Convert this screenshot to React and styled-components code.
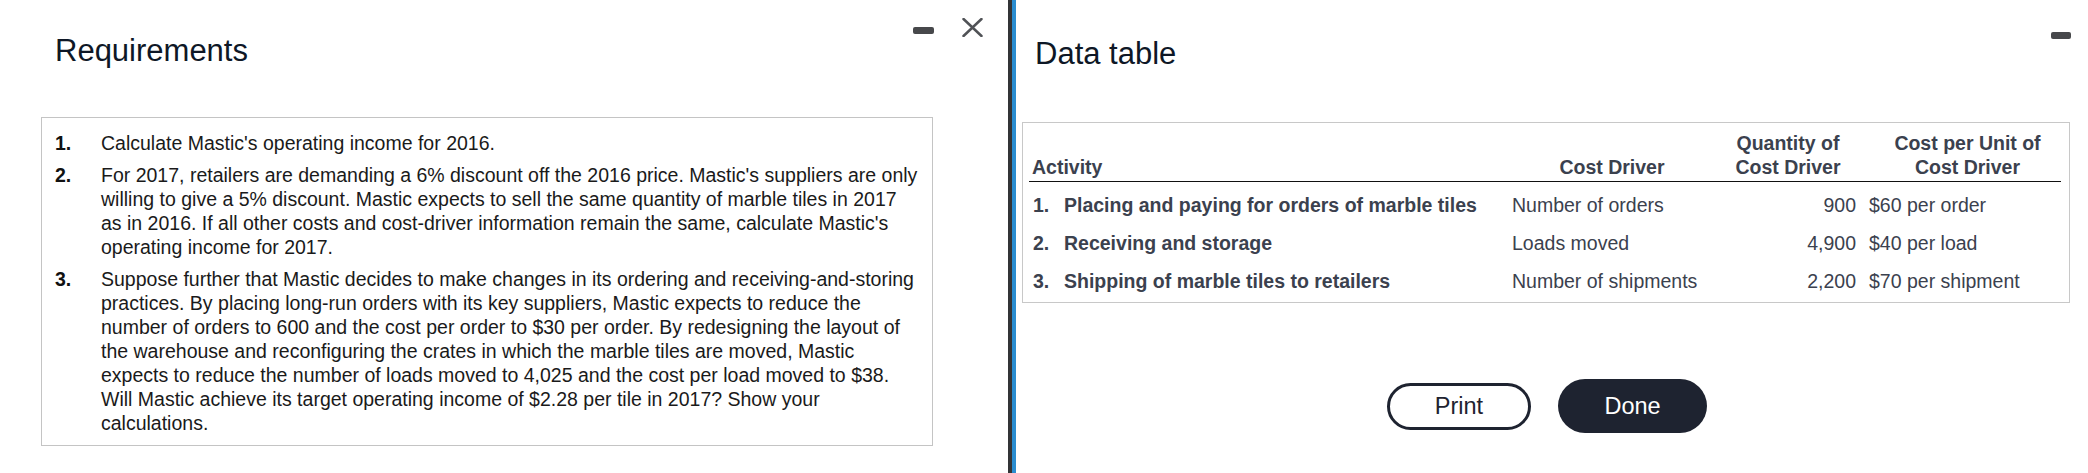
import React from "react";
import styled, { createGlobalStyle } from "styled-components";

const Global = createGlobalStyle`
  html, body { margin: 0; padding: 0; background: #ffffff; }
  body { font-family: "Liberation Sans", Arial, sans-serif; }
  * { box-sizing: border-box; }
`;

const Page = styled.div`
  display: flex;
  width: 2088px;
  height: 473px;
  background: #fff;
  overflow: hidden;
`;

const LeftPanel = styled.section`
  width: 1012px;
  height: 100%;
  border-right: 4px solid #333436;
  display: flex;
  flex-direction: column;
`;

const RightPanel = styled.section`
  flex: 1;
  height: 100%;
  border-left: 4px solid #2a8dd0;
  display: flex;
  flex-direction: column;
`;

const Header = styled.header`
  display: flex;
  justify-content: space-between;
  align-items: flex-start;
  padding: ${(p) => p.$pad};
`;

const Title = styled.h1`
  margin: ${(p) => p.$mt}px 0 0 0;
  font-size: 31px;
  line-height: 36px;
  font-weight: normal;
  color: #0e1726;
`;

const Controls = styled.div`
  display: flex;
  align-items: flex-start;
  gap: 28px;
`;

const MinusBar = styled.span`
  display: block;
  width: ${(p) => p.$w}px;
  height: 7px;
  margin-top: ${(p) => p.$mt}px;
  border-radius: 2px;
  background: #47484b;
`;

const CloseIcon = () => (
  <svg width="21" height="19" viewBox="0 0 21 19" style={{ display: "block" }}>
    <path d="M1.5 1 L19.5 18 M19.5 1 L1.5 18" stroke="#505256" strokeWidth="2.5" strokeLinecap="round" fill="none" />
  </svg>
);

const ReqBox = styled.div`
  margin: 48px 0 0 41px;
  width: 892px;
  border: 1px solid #c4c4c4;
  padding: 13px 13px 10px 13px;
  display: flex;
  flex-direction: column;
  gap: 8px;
`;

const ReqItem = styled.div`
  display: grid;
  grid-template-columns: 46px 818px;
  font-size: 19.5px;
  line-height: 24px;
  color: #1a1a1a;
`;

const ReqNum = styled.span`
  font-weight: bold;
  color: #111;
`;

const TableBox = styled.div`
  margin: 50px 18px 0 6px;
  border: 1px solid #c8c8c8;
  padding: 8px 8px 6px 6px;
`;

const Table = styled.table`
  width: 1032px;
  border-collapse: collapse;
  table-layout: fixed;
  font-size: 19.5px;
  line-height: 24px;
  color: #3b414e;
`;

const Th = styled.th`
  vertical-align: bottom;
  text-align: ${(p) => p.$align || "center"};
  font-weight: bold;
  padding: 0 4px 2px ${(p) => (p.$pl != null ? p.$pl : 4)}px;
  border-bottom: 1px solid #111;
  white-space: nowrap;
`;

const Td = styled.td`
  vertical-align: top;
  text-align: ${(p) => p.$align || "left"};
  font-weight: ${(p) => (p.$bold ? "bold" : "normal")};
  padding: 11px ${(p) => (p.$pr != null ? p.$pr : 4)}px 3px ${(p) => (p.$pl != null ? p.$pl : 4)}px;
  white-space: nowrap;
`;

const RowNum = styled.span`
  display: inline-block;
  width: 31px;
`;

const ButtonRow = styled.div`
  display: flex;
  justify-content: center;
  align-items: center;
  gap: 27px;
  margin-top: 76px;
  padding-right: 10px;
`;

const Button = styled.button`
  font-family: "Liberation Sans", Arial, sans-serif;
  font-size: 23.5px;
  border-radius: 999px;
  cursor: pointer;
  width: ${(p) => (p.$primary ? 149 : 144)}px;
  height: ${(p) => (p.$primary ? 54 : 47)}px;
  background: ${(p) => (p.$primary ? "#1e2330" : "#ffffff")};
  color: ${(p) => (p.$primary ? "#ffffff" : "#1e2330")};
  border: ${(p) => (p.$primary ? "none" : "3px solid #1e2330")};
  padding: 0;
`;

const requirements = [
  "Calculate Mastic's operating income for 2016.",
  "For 2017, retailers are demanding a 6% discount off the 2016 price. Mastic's suppliers are only willing to give a 5% discount. Mastic expects to sell the same quantity of marble tiles in 2017 as in 2016. If all other costs and cost-driver information remain the same, calculate Mastic's operating income for 2017.",
  "Suppose further that Mastic decides to make changes in its ordering and receiving-and-storing practices. By placing long-run orders with its key suppliers, Mastic expects to reduce the number of orders to 600 and the cost per order to $30 per order. By redesigning the layout of the warehouse and reconfiguring the crates in which the marble tiles are moved, Mastic expects to reduce the number of loads moved to 4,025 and the cost per load moved to $38. Will Mastic achieve its target operating income of $2.28 per tile in 2017? Show your calculations.",
];

const rows = [
  ["Placing and paying for orders of marble tiles", "Number of orders", "900", "$60 per order"],
  ["Receiving and storage", "Loads moved", "4,900", "$40 per load"],
  ["Shipping of marble tiles to retailers", "Number of shipments", "2,200", "$70 per shipment"],
];

export default function App() {
  return (
    <Page>
      <Global />
      <LeftPanel>
        <Header $pad="18px 25px 0 55px">
          <Title $mt={15}>Requirements</Title>
          <Controls>
            <MinusBar $w={21} $mt={9} />
            <CloseIcon />
          </Controls>
        </Header>
        <ReqBox>
          {requirements.map((t, i) => (
            <ReqItem key={i}>
              <ReqNum>{i + 1}.</ReqNum>
              <span>{t}</span>
            </ReqItem>
          ))}
        </ReqBox>
      </LeftPanel>
      <RightPanel>
        <Header $pad="32px 17px 0 19px">
          <Title $mt={4}>Data table</Title>
          <MinusBar $w={20} $mt={0} />
        </Header>
        <TableBox>
          <Table>
            <colgroup>
              <col style={{ width: 479 }} />
              <col style={{ width: 208 }} />
              <col style={{ width: 144 }} />
              <col style={{ width: 201 }} />
            </colgroup>
            <thead>
              <tr>
                <Th $align="left" $pl={3}>Activity</Th>
                <Th>Cost Driver</Th>
                <Th>Quantity of<br />Cost Driver</Th>
                <Th $pl={18}>Cost per Unit of<br />Cost Driver</Th>
              </tr>
            </thead>
            <tbody>
              {rows.map((r, i) => (
                <tr key={i}>
                  <Td $bold>
                    <RowNum>{i + 1}.</RowNum>
                    {r[0]}
                  </Td>
                  <Td>{r[1]}</Td>
                  <Td $align="right" $pr={4}>{r[2]}</Td>
                  <Td $pl={9}>{r[3]}</Td>
                </tr>
              ))}
            </tbody>
          </Table>
        </TableBox>
        <ButtonRow>
          <Button>Print</Button>
          <Button $primary>Done</Button>
        </ButtonRow>
      </RightPanel>
    </Page>
  );
}
